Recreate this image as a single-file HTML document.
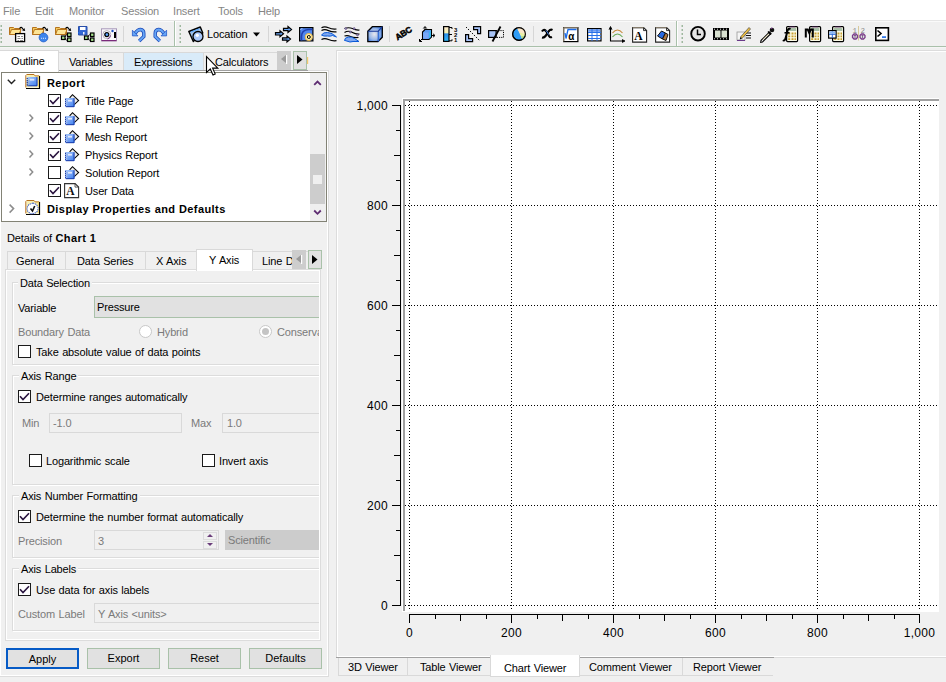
<!DOCTYPE html>
<html><head><meta charset="utf-8">
<style>
*{box-sizing:border-box;margin:0;padding:0}
html,body{width:946px;height:682px;overflow:hidden;background:#f0f0f0;position:relative;font-family:"Liberation Sans",sans-serif;font-size:11px;color:#000}
.a{position:absolute}
.t{position:absolute;white-space:nowrap;line-height:13px;font-size:11px;letter-spacing:-0.15px;word-spacing:0.6px}
.b,b{font-weight:bold;letter-spacing:0.42px;word-spacing:0}
.g{color:#7a7a7a}
.m{color:#858585}
.fr{position:absolute;border:1px solid #dcdcdc;box-shadow:inset 0 0 0 1px #fff}
.cb{position:absolute;width:13px;height:13px;border:1px solid #1a1a1a;background:#fff}

.tab{position:absolute;border:1px solid #d9d9d9;background:#f0f0f0}
.tabw{position:absolute;border:1px solid #d9d9d9;border-bottom:none;background:#fff}
.fld{position:absolute;border:1px solid #d9d9d9;background:#f0f0f0}
.btn{position:absolute;border:1px solid #a9c1a9;background:#e1e1e1;text-align:center;line-height:19px}
.grp{position:absolute;border:1px solid #dcdcdc;box-shadow:1px 1px 0 #fff, inset 1px 1px 0 #fff}
.gt{background:#f0f0f0}
.rad{position:absolute;width:13px;height:13px;border-radius:50%;border:1px solid #c8c8c8;background:#fff}
.rad.on::after{content:"";position:absolute;left:2px;top:2px;width:7px;height:7px;border-radius:50%;background:#c4c4c4}
.hd{height:1px;background:repeating-linear-gradient(to right,#000 0 1px,transparent 1px 3px)}
.vd{width:1px;background:repeating-linear-gradient(to bottom,#000 0 1px,transparent 1px 3px)}
.cl{position:absolute;white-space:nowrap;font-size:12px;line-height:14px;letter-spacing:0.3px}
</style></head><body>

<!-- menu bar -->
<div class="a" style="left:0;top:0;width:946px;height:20px;background:#fff"></div>
<div class="a" style="left:0;top:20px;width:946px;height:1px;background:#e6e6e6"></div>
<div class="a" style="left:0;top:21px;width:946px;height:1px;background:#fafafa"></div>
<div class="t m" style="left:3px;top:5px">File</div>
<div class="t m" style="left:35px;top:5px">Edit</div>
<div class="t m" style="left:69px;top:5px">Monitor</div>
<div class="t m" style="left:121px;top:5px">Session</div>
<div class="t m" style="left:173px;top:5px">Insert</div>
<div class="t m" style="left:218px;top:5px">Tools</div>
<div class="t m" style="left:258px;top:5px">Help</div>

<!-- toolbar -->
<div class="a" style="left:0;top:46px;width:946px;height:1px;background:#a9c0aa"></div>
<div class="a" style="left:0;top:47px;width:946px;height:1px;background:#f5f5f5"></div>
<div class="a" style="left:174px;top:21px;width:1px;height:25px;background:#a9c0aa"></div><div class="a" style="left:175px;top:21px;width:1px;height:25px;background:#fff"></div>
<div class="a" style="left:676px;top:21px;width:1px;height:25px;background:#a9c0aa"></div><div class="a" style="left:677px;top:21px;width:1px;height:25px;background:#fff"></div>
<div class="a" style="left:123px;top:26px;width:1px;height:16px;background:#d6d6d6"></div>
<div class="a" style="left:268px;top:26px;width:1px;height:16px;background:#d6d6d6"></div>
<div class="a" style="left:389px;top:26px;width:1px;height:16px;background:#d6d6d6"></div>
<div class="a" style="left:533px;top:26px;width:1px;height:16px;background:#d6d6d6"></div>
<div class="t" style="left:207px;top:28px">Location</div>

<!-- left outline tabs -->
<div class="fr" style="left:-1px;top:70px;width:330px;height:607px"></div>
<div class="tab" style="left:58px;top:52px;width:66px;height:19px"></div>
<div class="tab" style="left:123px;top:52px;width:81px;height:19px;background:#d9ebf9;border-color:#d9d9d9"></div>
<div class="tab" style="left:203px;top:52px;width:80px;height:19px"></div>
<div class="a" style="left:58px;top:70px;width:250px;height:1px;background:#a0a0a0"></div>
<div class="tabw" style="left:-1px;top:50px;width:60px;height:22px"></div>
<div class="t" style="left:11px;top:55px">Outline</div>
<div class="t" style="left:69px;top:56px">Variables</div>
<div class="t" style="left:134px;top:56px">Expressions</div>
<div class="t" style="left:215px;top:56px">Calculators</div>
<div class="a" style="left:277px;top:51px;width:14px;height:19px;background:#cdcdcd"></div>
<div class="a" style="left:293px;top:51px;width:14px;height:19px;background:#e1e1e1;border:1px solid #a9c1a9"></div>

<!-- tree box -->
<div class="a" style="left:1px;top:72px;width:326px;height:150px;border:1px solid #828275;background:#fff"></div>
<div class="a" style="left:310px;top:73px;width:16px;height:148px;background:#efefef"></div>
<div class="a" style="left:310px;top:154px;width:15px;height:50px;background:#cdcdcd"></div>
<div class="a" style="left:313px;top:175px;width:9px;height:9px;background:#efefef"></div>
<div class="t b" style="left:47px;top:77px">Report</div>
<div class="t" style="left:85px;top:95px">Title Page</div>
<div class="t" style="left:85px;top:113px">File Report</div>
<div class="t" style="left:85px;top:131px">Mesh Report</div>
<div class="t" style="left:85px;top:149px">Physics Report</div>
<div class="t" style="left:85px;top:167px">Solution Report</div>
<div class="t" style="left:85px;top:185px">User Data</div>
<div class="t b" style="left:47px;top:203px">Display Properties and Defaults</div>
<div class="cb ck" style="left:48px;top:94px"></div>
<div class="cb ck" style="left:48px;top:112px"></div>
<div class="cb ck" style="left:48px;top:130px"></div>
<div class="cb ck" style="left:48px;top:148px"></div>
<div class="cb" style="left:48px;top:166px"></div>
<div class="cb ck" style="left:48px;top:184px"></div>

<!-- details -->
<div class="t" style="left:7px;top:232px">Details of <b>Chart 1</b></div>
<div class="tab" style="left:7px;top:251px;width:59px;height:19px"></div>
<div class="tab" style="left:65px;top:251px;width:81px;height:19px"></div>
<div class="tab" style="left:145px;top:251px;width:52px;height:19px"></div>
<div class="tab" style="left:252px;top:251px;width:60px;height:19px"></div>
<div class="fr" style="left:5px;top:269px;width:316px;height:372px"></div>
<div class="tabw" style="left:196px;top:249px;width:57px;height:22px"></div>
<div class="t" style="left:16px;top:255px">General</div>
<div class="t" style="left:77px;top:255px">Data Series</div>
<div class="t" style="left:156px;top:255px">X Axis</div>
<div class="t" style="left:209px;top:254px">Y Axis</div>
<div class="t" style="left:262px;top:255px;width:30px;overflow:hidden">Line Data</div>
<div class="a" style="left:292px;top:250px;width:14px;height:19px;background:#cdcdcd"></div>
<div class="a" style="left:308px;top:250px;width:14px;height:19px;background:#e1e1e1;border:1px solid #a9c1a9"></div>

<div class="a" id="pane" style="left:6px;top:270px;width:313px;height:369px;overflow:hidden">

 <div class="grp" style="left:6px;top:12px;width:400px;height:83px"></div>
 <div class="t gt" style="left:12px;top:7px;padding:0 2px">Data Selection</div>
 <div class="t" style="left:12px;top:32px">Variable</div>
 <div class="a" style="left:88px;top:26px;width:300px;height:22px;background:#e1e1e1;border:1px solid #a9c1a9"></div>
 <div class="t" style="left:91px;top:31px">Pressure</div>
 <div class="t g" style="left:12px;top:56px">Boundary Data</div>
 <div class="rad" style="left:133px;top:55px"></div>
 <div class="t g" style="left:151px;top:56px">Hybrid</div>
 <div class="rad on" style="left:253px;top:55px"></div>
 <div class="t g" style="left:271px;top:56px">Conservative</div>
 <div class="cb" style="left:12px;top:75px"></div>
 <div class="t" style="left:30px;top:76px">Take absolute value of data points</div>

 <div class="grp" style="left:6px;top:105px;width:400px;height:110px"></div>
 <div class="t gt" style="left:13px;top:100px;padding:0 2px">Axis Range</div>
 <div class="cb ck" style="left:12px;top:120px"></div>
 <div class="t" style="left:30px;top:121px">Determine ranges automatically</div>
 <div class="t g" style="left:16px;top:147px">Min</div>
 <div class="fld" style="left:43px;top:143px;width:133px;height:20px"></div>
 <div class="t g" style="left:47px;top:147px">-1.0</div>
 <div class="t g" style="left:185px;top:147px">Max</div>
 <div class="fld" style="left:216px;top:143px;width:200px;height:20px"></div>
 <div class="t g" style="left:221px;top:147px">1.0</div>
 <div class="cb" style="left:23px;top:184px"></div>
 <div class="t" style="left:40px;top:185px">Logarithmic scale</div>
 <div class="cb" style="left:196px;top:184px"></div>
 <div class="t" style="left:213px;top:185px">Invert axis</div>

 <div class="grp" style="left:6px;top:225px;width:400px;height:63px"></div>
 <div class="t gt" style="left:13px;top:220px;padding:0 2px">Axis Number Formatting</div>
 <div class="cb ck" style="left:12px;top:240px"></div>
 <div class="t" style="left:30px;top:241px">Determine the number format automatically</div>
 <div class="t g" style="left:12px;top:265px">Precision</div>
 <div class="fld" style="left:88px;top:260px;width:125px;height:20px"></div>
 <div class="t g" style="left:92px;top:265px">3</div>
 <div class="a" style="left:197px;top:262px;width:14px;height:8px;border:1px solid #dcdcdc"></div>
 <div class="a" style="left:197px;top:271px;width:14px;height:8px;border:1px solid #dcdcdc"></div>
 <div class="a" style="left:201px;top:264px;width:0;height:0;border-left:3px solid transparent;border-right:3px solid transparent;border-bottom:3px solid #6a3d7a"></div>
 <div class="a" style="left:201px;top:273px;width:0;height:0;border-left:3px solid transparent;border-right:3px solid transparent;border-top:3px solid #6a3d7a"></div>
 <div class="a" style="left:219px;top:260px;width:200px;height:20px;background:#cccccc"></div>
 <div class="t g" style="left:222px;top:264px">Scientific</div>

 <div class="grp" style="left:6px;top:298px;width:400px;height:63px"></div>
 <div class="t gt" style="left:13px;top:293px;padding:0 2px">Axis Labels</div>
 <div class="cb ck" style="left:12px;top:313px"></div>
 <div class="t" style="left:30px;top:314px">Use data for axis labels</div>
 <div class="t g" style="left:12px;top:338px">Custom Label</div>
 <div class="fld" style="left:88px;top:333px;width:300px;height:20px"></div>
 <div class="t g" style="left:92px;top:338px">Y Axis &lt;units&gt;</div>
</div>

<!-- buttons -->
<div class="btn" style="left:6px;top:648px;width:73px;height:21px;border:2px solid #065bc6;line-height:18px">Apply</div>
<div class="btn" style="left:87px;top:648px;width:73px;height:21px">Export</div>
<div class="btn" style="left:168px;top:648px;width:73px;height:21px">Reset</div>
<div class="btn" style="left:249px;top:648px;width:73px;height:21px">Defaults</div>

<!-- chart panel -->
<div class="fr" style="left:336px;top:50px;width:620px;height:608px"></div>
<div class="a" style="left:402px;top:98px;width:537px;height:514px;background:#fff"></div>
<div class="a" style="left:403px;top:99px;width:536px;height:2px;background:#a0a0a0"></div>
<div class="a" style="left:403px;top:99px;width:2px;height:512px;background:#a0a0a0"></div>
<div class="a hd" style="left:405px;top:105px;width:533px"></div>
<div class="a hd" style="left:405px;top:205px;width:533px"></div>
<div class="a hd" style="left:405px;top:305px;width:533px"></div>
<div class="a hd" style="left:405px;top:405px;width:533px"></div>
<div class="a hd" style="left:405px;top:505px;width:533px"></div>
<div class="a hd" style="left:405px;top:605px;width:533px"></div>
<div class="a vd" style="left:409px;top:101px;height:509px"></div>
<div class="a vd" style="left:511px;top:101px;height:509px"></div>
<div class="a vd" style="left:613px;top:101px;height:509px"></div>
<div class="a vd" style="left:715px;top:101px;height:509px"></div>
<div class="a vd" style="left:817px;top:101px;height:509px"></div>
<div class="a vd" style="left:919px;top:101px;height:509px"></div>
<div class="a" style="left:400px;top:105px;width:1px;height:501px;background:#000"></div>
<div class="a" style="left:392px;top:105px;width:9px;height:1px;background:#000"></div>
<div class="a" style="left:396px;top:130px;width:5px;height:1px;background:#000"></div>
<div class="a" style="left:394px;top:155px;width:7px;height:1px;background:#000"></div>
<div class="a" style="left:396px;top:180px;width:5px;height:1px;background:#000"></div>
<div class="a" style="left:392px;top:205px;width:9px;height:1px;background:#000"></div>
<div class="a" style="left:396px;top:230px;width:5px;height:1px;background:#000"></div>
<div class="a" style="left:394px;top:255px;width:7px;height:1px;background:#000"></div>
<div class="a" style="left:396px;top:280px;width:5px;height:1px;background:#000"></div>
<div class="a" style="left:392px;top:305px;width:9px;height:1px;background:#000"></div>
<div class="a" style="left:396px;top:330px;width:5px;height:1px;background:#000"></div>
<div class="a" style="left:394px;top:355px;width:7px;height:1px;background:#000"></div>
<div class="a" style="left:396px;top:380px;width:5px;height:1px;background:#000"></div>
<div class="a" style="left:392px;top:405px;width:9px;height:1px;background:#000"></div>
<div class="a" style="left:396px;top:430px;width:5px;height:1px;background:#000"></div>
<div class="a" style="left:394px;top:455px;width:7px;height:1px;background:#000"></div>
<div class="a" style="left:396px;top:480px;width:5px;height:1px;background:#000"></div>
<div class="a" style="left:392px;top:505px;width:9px;height:1px;background:#000"></div>
<div class="a" style="left:396px;top:530px;width:5px;height:1px;background:#000"></div>
<div class="a" style="left:394px;top:555px;width:7px;height:1px;background:#000"></div>
<div class="a" style="left:396px;top:580px;width:5px;height:1px;background:#000"></div>
<div class="a" style="left:392px;top:605px;width:9px;height:1px;background:#000"></div>
<div class="cl" style="right:558px;top:99px">1,000</div>
<div class="cl" style="right:558px;top:199px">800</div>
<div class="cl" style="right:558px;top:299px">600</div>
<div class="cl" style="right:558px;top:399px">400</div>
<div class="cl" style="right:558px;top:499px">200</div>
<div class="cl" style="right:558px;top:599px">0</div>
<div class="a" style="left:409px;top:614px;width:511px;height:1px;background:#000"></div>
<div class="a" style="left:409px;top:614px;width:1px;height:9px;background:#000"></div>
<div class="a" style="left:435px;top:614px;width:1px;height:5px;background:#000"></div>
<div class="a" style="left:460px;top:614px;width:1px;height:7px;background:#000"></div>
<div class="a" style="left:486px;top:614px;width:1px;height:5px;background:#000"></div>
<div class="a" style="left:511px;top:614px;width:1px;height:9px;background:#000"></div>
<div class="a" style="left:537px;top:614px;width:1px;height:5px;background:#000"></div>
<div class="a" style="left:562px;top:614px;width:1px;height:7px;background:#000"></div>
<div class="a" style="left:588px;top:614px;width:1px;height:5px;background:#000"></div>
<div class="a" style="left:613px;top:614px;width:1px;height:9px;background:#000"></div>
<div class="a" style="left:639px;top:614px;width:1px;height:5px;background:#000"></div>
<div class="a" style="left:664px;top:614px;width:1px;height:7px;background:#000"></div>
<div class="a" style="left:690px;top:614px;width:1px;height:5px;background:#000"></div>
<div class="a" style="left:715px;top:614px;width:1px;height:9px;background:#000"></div>
<div class="a" style="left:741px;top:614px;width:1px;height:5px;background:#000"></div>
<div class="a" style="left:766px;top:614px;width:1px;height:7px;background:#000"></div>
<div class="a" style="left:792px;top:614px;width:1px;height:5px;background:#000"></div>
<div class="a" style="left:817px;top:614px;width:1px;height:9px;background:#000"></div>
<div class="a" style="left:843px;top:614px;width:1px;height:5px;background:#000"></div>
<div class="a" style="left:868px;top:614px;width:1px;height:7px;background:#000"></div>
<div class="a" style="left:894px;top:614px;width:1px;height:5px;background:#000"></div>
<div class="a" style="left:919px;top:614px;width:1px;height:9px;background:#000"></div>
<div class="cl" style="left:379px;width:61px;text-align:center;top:626px">0</div>
<div class="cl" style="left:481px;width:61px;text-align:center;top:626px">200</div>
<div class="cl" style="left:583px;width:61px;text-align:center;top:626px">400</div>
<div class="cl" style="left:685px;width:61px;text-align:center;top:626px">600</div>
<div class="cl" style="left:787px;width:61px;text-align:center;top:626px">800</div>
<div class="cl" style="left:889px;width:61px;text-align:center;top:626px">1,000</div>

<!-- bottom tabs -->
<div class="tab" style="left:338px;top:657px;width:70px;height:19px"></div>
<div class="tab" style="left:407px;top:657px;width:84px;height:19px"></div>
<div class="tab" style="left:579px;top:657px;width:104px;height:19px"></div>
<div class="tab" style="left:682px;top:657px;width:91px;height:19px;border-right:none"></div>
<div class="a" style="left:336px;top:657px;width:438px;height:1px;background:#a0a0a0"></div>
<div class="a" style="left:490px;top:655px;width:90px;height:22px;background:#fff;border:1px solid #d9d9d9;border-top:none"></div>
<div class="t" style="left:348px;top:661px">3D Viewer</div>
<div class="t" style="left:420px;top:661px">Table Viewer</div>
<div class="t" style="left:504px;top:662px">Chart Viewer</div>
<div class="t" style="left:589px;top:661px">Comment Viewer</div>
<div class="t" style="left:693px;top:661px">Report Viewer</div>

<svg class="a" style="left:0;top:0" width="946" height="682"><g transform="translate(9,26)"><path d="M0.5,1.5h4l1,1h6v6h-11z" fill="#f2c85e" stroke="#b5731c"/><path d="M0.5,8.5l2,-5h9.5l-2,5z" fill="#fde596" stroke="#b5731c"/><path d="M10.5,2.5q1.7,-2.2 3,0q0.6,1 1.5,1.2" fill="none" stroke="#000" stroke-width="1.1"/><path d="M13.2,4.6l3,0.3l-0.8,-2.8z" fill="#000"/><rect x="6.6" y="7.6" width="9" height="8" fill="#fff" stroke="#000" stroke-width="1.3"/><path d="M8.5,10.5h2.5M12,10.5h2M8.5,12.5h3M12.5,12.5h1.5M8.5,14.5h1.5M11,14.5h3" stroke="#8a8a8a" stroke-width="1"/></g><g transform="translate(32,26)"><path d="M0.5,1.5h4l1,1h6v6h-11z" fill="#f2c85e" stroke="#b5731c"/><path d="M0.5,8.5l2,-5h9.5l-2,5z" fill="#fde596" stroke="#b5731c"/><path d="M10.5,2.5q1.7,-2.2 3,0q0.6,1 1.5,1.2" fill="none" stroke="#000" stroke-width="1.1"/><path d="M13.2,4.6l3,0.3l-0.8,-2.8z" fill="#000"/><circle cx="11.5" cy="11.5" r="4.4" fill="#3b84ec" stroke="#2360c8" stroke-width="0.8"/><path d="M9.2,12.3h0.9M11.1,12.3h0.9M13,12.3h0.9" stroke="#fff" stroke-width="1.1"/></g><g transform="translate(55,26)"><path d="M0.5,1.5h4l1,1h6v6h-11z" fill="#f2c85e" stroke="#b5731c"/><path d="M0.5,8.5l2,-5h9.5l-2,5z" fill="#fde596" stroke="#b5731c"/><path d="M10.5,2.5q1.7,-2.2 3,0q0.6,1 1.5,1.2" fill="none" stroke="#000" stroke-width="1.1"/><path d="M13.2,4.6l3,0.3l-0.8,-2.8z" fill="#000"/><path d="M7,11.5h2.5M9.5,11.5l2,-3M9.5,11.5l2,3" stroke="#000" stroke-width="1"/><rect x="6.5" y="10" width="3.5" height="3.5" fill="#a6e38c" stroke="#000" stroke-width="1.2"/><rect x="12.5" y="7" width="3.5" height="3.5" fill="#a6e38c" stroke="#000" stroke-width="1.2"/><rect x="12.5" y="12" width="3.5" height="3.5" fill="#a6e38c" stroke="#000" stroke-width="1.2"/></g><g transform="translate(78,26)"><path d="M0.5,0.5h8.5v8.5h-8.5z" fill="#3368d4" stroke="#2a4fa8"/><rect x="2" y="1" width="5.5" height="3" fill="#fff"/><rect x="5" y="6" width="1.5" height="2.5" fill="#e8eefc"/><rect x="0" y="6" width="1" height="1.5" fill="#1a6ae8"/><path d="M7,11.5h2.5M9.5,11.5l2,-3M9.5,11.5l2,3" stroke="#000" stroke-width="1"/><rect x="6.5" y="10" width="3.5" height="3.5" fill="#a6e38c" stroke="#000" stroke-width="1.2"/><rect x="12.5" y="7" width="3.5" height="3.5" fill="#a6e38c" stroke="#000" stroke-width="1.2"/><rect x="12.5" y="12" width="3.5" height="3.5" fill="#a6e38c" stroke="#000" stroke-width="1.2"/></g><g transform="translate(101,28)"><rect x="0.5" y="0.8" width="15" height="12" fill="#faf8fc" stroke="#a898b8" stroke-width="1"/><circle cx="5.8" cy="6.6" r="4" fill="#fff" stroke="#b8b0c0" stroke-width="1"/><path d="M9.5,7.5a4,4 0 0 1 -3,3.5" fill="none" stroke="#7a3a8a" stroke-width="1"/><circle cx="5.8" cy="6.6" r="2.6" fill="#000"/><circle cx="5.9" cy="6.6" r="1.3" fill="#5aa0ff"/><rect x="13" y="4" width="2" height="6" fill="#000"/><circle cx="11.5" cy="3" r="1.2" fill="#2050c0"/><rect x="0.5" y="12" width="15" height="1.2" fill="#7a2a7a"/></g><g transform="translate(132,28)"><path d="M3,5.5Q5.5,1.5 8.5,1.5Q11.8,1.8 11.8,5.5V8.5L7.2,13" fill="none" stroke="#1d49b8" stroke-width="3.4"/><path d="M3,5.5Q5.5,1.5 8.5,1.5Q11.8,1.8 11.8,5.5V8.5L7.2,13" fill="none" stroke="#66a6f6" stroke-width="1.8"/><path d="M0.4,2.2V7.9H6z" fill="#66a6f6" stroke="#2a5ac8" stroke-width="0.8"/></g><g transform="translate(167,28)"><g transform="scale(-1,1)"><path d="M3,5.5Q5.5,1.5 8.5,1.5Q11.8,1.8 11.8,5.5V8.5L7.2,13" fill="none" stroke="#1d49b8" stroke-width="3.4"/><path d="M3,5.5Q5.5,1.5 8.5,1.5Q11.8,1.8 11.8,5.5V8.5L7.2,13" fill="none" stroke="#66a6f6" stroke-width="1.8"/><path d="M0.4,2.2V7.9H6z" fill="#66a6f6" stroke="#2a5ac8" stroke-width="0.8"/></g></g><g transform="translate(188,26)"><path d="M0.8,5.5l11.5,-4.5l2.5,6l-9.5,8.5z" fill="#9cc0ea" stroke="#000" stroke-width="1.4" stroke-linejoin="round"/><path d="M3,6l8,-3" stroke="#5aa8ff" stroke-width="1.2"/><circle cx="10" cy="10.5" r="5" fill="#a9c8fb" stroke="#000" stroke-width="1.3"/><circle cx="9.3" cy="9.3" r="1.6" fill="#fff"/></g><g transform="translate(275,26)"><path d="M8.5,2.3h4.5v-1.8l3.5,3l-3.5,3v-1.8h-4.5z" fill="#6aa6f5" stroke="#000" stroke-width="1.2" stroke-linejoin="miter"/><path d="M0.5,6.6h4.5v-1.8l3.5,3l-3.5,3v-1.8h-4.5z" fill="#6aa6f5" stroke="#000" stroke-width="1.2" stroke-linejoin="miter"/><path d="M7.5,11.8h4.5v-1.8l3.5,3l-3.5,3v-1.8h-4.5z" fill="#6aa6f5" stroke="#000" stroke-width="1.2" stroke-linejoin="miter"/></g><g transform="translate(299,27)"><rect x="0.6" y="0.6" width="13.3" height="13.3" fill="#4f86ee" stroke="#000" stroke-width="1.2"/><path d="M2.5,13.5v-4q0,-6.5 7,-7h4" fill="none" stroke="#2040b0" stroke-width="1.6"/><path d="M1.5,3q0,-1.5 2,-1.5" fill="none" stroke="#9ec0ff" stroke-width="1"/><circle cx="9.8" cy="10" r="3.6" fill="#fff2b0" stroke="#e8b84a" stroke-width="1"/><circle cx="9.8" cy="10" r="1.5" fill="none" stroke="#000" stroke-width="1"/></g><g transform="translate(321,26)"><path d="M0.5,1.8q3,-1.8 7,0t8,1.2" fill="none" stroke="#000" stroke-width="1.2"/><path d="M0.5,4.6q3,-1.8 7,0t8,1.2" fill="none" stroke="#000" stroke-width="1.2"/><path d="M0.5,9q2,-3 6,-2.5q4,0.5 6,2l3,2.5l-4,-1.5q-2,1 -5,0.5q-4,0.5 -6,-1z" fill="#7fa8f0" stroke="#0a5ad8" stroke-width="1"/><path d="M0.5,13.5q3,-1.8 7,0t8,1.2" fill="none" stroke="#000" stroke-width="1.2"/></g><g transform="translate(344,27)"><path d="M0.5,1.5q4,-1.5 8,0q3,1.8 7,1.5" fill="none" stroke="#000" stroke-width="1.2"/><path d="M0.5,5.5q4,-2.5 8,0q3,1.8 7,1.5" fill="none" stroke="#000" stroke-width="1.2"/><path d="M0.5,9q3,-1 6,0.5q3,1.5 8,1" fill="none" stroke="#000" stroke-width="1.1"/><circle cx="1.8" cy="1.6" r="1" fill="#8ab" stroke="#602070" stroke-width="0.5"/><circle cx="10.2" cy="1.6" r="1" fill="#8ab" stroke="#602070" stroke-width="0.5"/><circle cx="6.4" cy="5" r="1" fill="#8ab" stroke="#602070" stroke-width="0.5"/><circle cx="13.5" cy="8" r="1" fill="#8ab" stroke="#602070" stroke-width="0.5"/><path d="M0.5,13.5q0,-3 4,-3.5q3,-0.5 6,1.5l4.5,3h-6q-2,1.5 -8,-1z" fill="#7fa8f0" stroke="#0a5ad8" stroke-width="1"/></g><g transform="translate(367,26)"><defs><radialGradient id="cg" cx="0.45" cy="0.5" r="0.6"><stop offset="0" stop-color="#e8e8ee"/><stop offset="0.6" stop-color="#9ab8e8"/><stop offset="1" stop-color="#3a78e0"/></radialGradient></defs><path d="M0.8,5.2l4.5,-4.5h10v10.5l-4.5,4.5h-10z" fill="url(#cg)" stroke="#000" stroke-width="1.3" stroke-linejoin="round"/><path d="M0.8,5.2h10.5v10.5M11.3,5.2l4,-4.5" fill="none" stroke="#1a3a9a" stroke-width="1.1"/><path d="M11.8,6v9" stroke="#3a80f0" stroke-width="1"/></g><g transform="translate(396,26)"><text x="0" y="0" transform="translate(1.5,14.5) rotate(-32)" font-family="Liberation Sans" font-weight="bold" font-size="8.5" fill="#000" stroke="#000" stroke-width="0.5" letter-spacing="-0.2">ABC</text></g><g transform="translate(419,26)"><path d="M6,1v6M4.3,2.5l1.7,-2l1.7,2" fill="none" stroke="#000" stroke-width="1"/><path d="M11,9.5h4.5M14,7.8l2,1.7l-2,1.7" fill="none" stroke="#000" stroke-width="1"/><path d="M4,12l-3,3M0.5,13v2.5h2.5" fill="none" stroke="#000" stroke-width="1"/><path d="M3.5,6l2.5,-2.5h6.5v7.5l-2.5,2.5h-6.5z" fill="#5a9af0" stroke="#000" stroke-width="1.1"/><rect x="4.2" y="6.5" width="5.3" height="6" fill="#78a8f8"/><path d="M10,6.2l2,-2v6.5l-2,2z" fill="#3ab8f0"/></g><g transform="translate(443,26)"><defs><linearGradient id="lg" x1="0" y1="0" x2="0" y2="1"><stop offset="0" stop-color="#fce8d0"/><stop offset="0.4" stop-color="#f4f0b0"/><stop offset="0.5" stop-color="#2b8ee8"/><stop offset="1" stop-color="#30b8f8"/></linearGradient></defs><rect x="0.6" y="0.6" width="5.4" height="14.8" fill="url(#lg)" stroke="#000" stroke-width="1.2"/><path d="M6,1.5h3v1.5M6,8.5h3M6,14.8h3v-1.5" fill="none" stroke="#000" stroke-width="1"/><text x="11" y="6" font-family="Liberation Sans" font-weight="bold" font-size="6" fill="#000">3</text><text x="11" y="11" font-family="Liberation Sans" font-weight="bold" font-size="6" fill="#000">2</text><text x="11" y="16" font-family="Liberation Sans" font-weight="bold" font-size="6" fill="#000">1</text></g><g transform="translate(465,26)"><path d="M1,1l14,14" stroke="#000" stroke-width="1" stroke-dasharray="1.4 1.4"/><path d="M8.6,0.6h7v7h-3v-4h-4z" fill="#a8c4fa" stroke="#000" stroke-width="1.2"/><path d="M0.6,8.6v7h7v-3h-4v-4z" fill="#a8c4fa" stroke="#000" stroke-width="1.2"/></g><g transform="translate(488,26)"><rect x="0.6" y="4.6" width="7.5" height="6.8" fill="#a8c4f6" stroke="#000" stroke-width="1.2"/><path d="M8,4.6h7.5v6.8h-7.5" fill="none" stroke="#000" stroke-width="1" stroke-dasharray="1.2 1"/><path d="M12.5,0.5l-8,15" stroke="#000" stroke-width="1.8"/></g><g transform="translate(512,27)"><circle cx="7" cy="7" r="6.3" fill="#2e9cf6" stroke="#000" stroke-width="1.1"/><path d="M5,0.9L10.4,12.3A6.3,6.3 0 0 0 5,0.9z" fill="#fbe6c8"/><path d="M5,0.9A6.3,6.3 0 0 1 13.3,7.2L7.7,5.5z" fill="#fbe6c8"/><path d="M7.7,5.5L13.3,7.2A6.3,6.3 0 0 1 10.4,12.3z" fill="#e8f0a0"/><path d="M8.8,9.2L13,9A6.3,6.3 0 0 1 10.4,12.3z" fill="#b0d890"/><circle cx="7" cy="7" r="6.4" fill="none" stroke="#000" stroke-width="1.1"/></g><g transform="translate(541,28)"><path d="M1,3.5q1.5,-2.5 3.5,-1q2,2 3,4.5q1,3 3.5,2" fill="none" stroke="#000" stroke-width="2.2"/><path d="M11.5,2q-2,-1 -4,1.5l-3,4.5q-1.5,2 -3.5,1.5" fill="none" stroke="#000" stroke-width="2.2"/><path d="M5,2.5q1.5,1.5 2.5,4" fill="none" stroke="#4a90ff" stroke-width="1"/></g><g transform="translate(563,27)"><rect x="0.6" y="0.6" width="14.3" height="14" fill="#fff" stroke="#000" stroke-width="1.2"/><path d="M0.6,0.6h14.3M0.6,0.6v14" stroke="#7a7060" stroke-width="1.2"/><path d="M1.8,1.2" fill="none"/><path d="M2,6l1,5.5l2,-9h8.5" fill="none" stroke="#1a6ae8" stroke-width="1.3"/><text x="5.2" y="12.8" font-family="Liberation Sans" font-weight="bold" font-size="10" fill="#000">&#945;</text></g><g transform="translate(587,28)"><rect x="0.6" y="0.6" width="13.4" height="12.3" fill="#fff" stroke="#000" stroke-width="1.2"/><rect x="1.2" y="1.2" width="12.2" height="2.6" fill="#6a9af0"/><path d="M1,4.5h13M1,7.5h13M1,10.5h13M5,1v12M10,1v12" stroke="#2a72e8" stroke-width="1"/></g><g transform="translate(609,26)"><path d="M1.5,2v13h13" fill="none" stroke="#000" stroke-width="1.1"/><path d="M0,3.5l1.5,-3l1.5,3M13,13.5l3,1.5l-3,1.5" fill="#000" stroke="#000" stroke-width="0.8"/><path d="M3.5,7q5,-6 10,0" fill="none" stroke="#c88a3a" stroke-width="1.1"/><path d="M3.5,11q5,-6 10,0" fill="none" stroke="#6aaa5a" stroke-width="1.1"/></g><g transform="translate(632,27)"><path d="M0.6,0.6h11l3,3v11.5h-14z" fill="#fff" stroke="#222" stroke-width="1.1"/><path d="M11.5,0.6v3h3" fill="none" stroke="#222" stroke-width="0.9"/><path d="M0.6,0.6h11" stroke="#8a8070" stroke-width="1.1"/><text x="2.3" y="12.5" font-family="Liberation Serif" font-weight="bold" font-size="11.5" fill="#000">A</text></g><g transform="translate(655,27)"><path d="M0.6,0.6h11l3,3v11.5h-14z" fill="#fff" stroke="#222" stroke-width="1.1"/><path d="M11.5,0.6v3h3" fill="none" stroke="#222" stroke-width="0.9"/><path d="M0.6,0.6h11" stroke="#8a8070" stroke-width="1.1"/><path d="M2.5,9l4,-5l4,2l-3,6z" fill="#2a6ae0" stroke="#111" stroke-width="1"/><path d="M7.5,12l3,-6l2.5,1.5l-2,6z" fill="#b07840" stroke="#111" stroke-width="1"/></g><g transform="translate(690,26)"><circle cx="8" cy="7.7" r="6.8" fill="#e4e4e4" stroke="#000" stroke-width="1.9"/><path d="M7.5,3.5v5h3.5" fill="none" stroke="#000" stroke-width="1.5"/></g><g transform="translate(713,28)"><rect x="0" y="0" width="16" height="12" fill="#000"/><rect x="2" y="2.5" width="5.5" height="7" fill="#d8e0d0"/><rect x="8.5" y="2.5" width="5.5" height="7" fill="#d8e0d0"/><path d="M1,1.2h14M1,10.8h14" stroke="#fff" stroke-width="0.9" stroke-dasharray="1 2"/></g><g transform="translate(736,27)"><rect x="1" y="5" width="8" height="8" fill="#f4f4f4" stroke="#999" stroke-width="0.8"/><path d="M1,13.5h8" stroke="#6a3a8a" stroke-width="1"/><path d="M9,6h6M10,8.5h5M10,11h5" stroke="#111" stroke-width="1"/><path d="M4.5,10l8.5,-9.5l1.5,1.5l-8.5,9.5z" fill="#f0c040" stroke="#444" stroke-width="0.7"/><path d="M4.5,10l-0.8,2.5l2.3,-1z" fill="#000"/></g><g transform="translate(760,27)"><path d="M1,13.5l8.5,-8.5l1.5,1.5l-8.5,8.5l-1.8,0.3z" fill="#fff" stroke="#000" stroke-width="1.1"/><path d="M3,12.5l6,-6" stroke="#e8d8a0" stroke-width="0.8"/><path d="M8,4.5l3,3" stroke="#000" stroke-width="1.6"/><circle cx="12" cy="3" r="2.3" fill="#111"/><circle cx="11.7" cy="1.2" r="0.8" fill="#7a3a8a"/></g><g transform="translate(782,26)"><rect x="4.6" y="0.6" width="11" height="15" rx="1" fill="#fbfbe8" stroke="#000" stroke-width="1.2"/><rect x="6" y="2" width="8.3" height="3" fill="#a8c0a8"/><path d="M6.2,7.5h2M9.5,7.5h2M12.5,7.5h1.5M6.2,10.3h2M9.5,10.3h2M12.5,10.3h1.5M6.2,13.2h2M9.5,13.2h2M12.5,13.2h1.5" stroke="#c8a030" stroke-width="1.8"/><path d="M7,1h6" stroke="#7a3a8a" stroke-width="0.6"/><path d="M0.8,14.2q1.5,1 2.5,-1.2l2.3,-8.5q0.7,-2.3 3,-1.6" fill="none" stroke="#000" stroke-width="1.9"/><path d="M2.5,6.8h5" stroke="#000" stroke-width="1.6"/></g><g transform="translate(805,26)"><rect x="4.6" y="0.6" width="11" height="15" rx="1" fill="#fbfbe8" stroke="#000" stroke-width="1.2"/><rect x="6" y="2" width="8.3" height="3" fill="#a8c0a8"/><path d="M6.2,7.5h2M9.5,7.5h2M12.5,7.5h1.5M6.2,10.3h2M9.5,10.3h2M12.5,10.3h1.5M6.2,13.2h2M9.5,13.2h2M12.5,13.2h1.5" stroke="#c8a030" stroke-width="1.8"/><path d="M7,1h6" stroke="#7a3a8a" stroke-width="0.6"/><path d="M0.8,11.5v-8h2l1.5,3.5l1.5,-3.5h2v8" fill="none" stroke="#000" stroke-width="2"/></g><g transform="translate(828,26)"><rect x="4.6" y="0.6" width="11" height="15" rx="1" fill="#fbfbe8" stroke="#000" stroke-width="1.2"/><rect x="6" y="2" width="8.3" height="3" fill="#a8c0a8"/><path d="M6.2,7.5h2M9.5,7.5h2M12.5,7.5h1.5M6.2,10.3h2M9.5,10.3h2M12.5,10.3h1.5M6.2,13.2h2M9.5,13.2h2M12.5,13.2h1.5" stroke="#c8a030" stroke-width="1.8"/><path d="M7,1h6" stroke="#7a3a8a" stroke-width="0.6"/><rect x="0.6" y="4.6" width="7.5" height="7.5" fill="#fff" stroke="#000" stroke-width="1.2"/><path d="M1,8.3h7M4.3,5v7" stroke="#2a6ad8" stroke-width="1"/><rect x="1.5" y="5.5" width="5.8" height="2.3" fill="#8ab8f8"/></g><g transform="translate(851,26)"><text x="1.6" y="6.8" font-family="Liberation Mono" font-size="7.5" fill="#8a8a8a">1</text><text x="9.5" y="6.8" font-family="Liberation Mono" font-size="7.5" fill="#8a8a8a">2</text><path d="M7.5,0v14.5" stroke="#d4c490" stroke-width="0.9"/><path d="M1.5,9.5l1.5,-1.5h2l1.5,1.5v2l-1.5,1.5h-2l-1.5,-1.5z" fill="#d8e8d8" stroke="#7a3a8a" stroke-width="1.3"/><path d="M9,9.5l1.5,-1.5h2l1.5,1.5v2l-1.5,1.5h-2l-1.5,-1.5z" fill="#d8e8d8" stroke="#7a3a8a" stroke-width="1.3"/><path d="M3,9.5h2M4,9.5v2.5M10.5,9.5h2M11.5,9.5v2.5" stroke="#7a3a8a" stroke-width="0.8"/></g><g transform="translate(875,27)"><rect x="0.8" y="0.8" width="12.6" height="12.6" fill="#fff" stroke="#000" stroke-width="1.6"/><path d="M2.5,3.5l3.5,3l-3.5,3" fill="none" stroke="#000" stroke-width="1.6"/><rect x="7" y="9.3" width="4" height="1.6" fill="#1a6ae8"/></g><rect x="0.5" y="25" width="1.5" height="2" fill="#9fb89f"/><rect x="0.5" y="29" width="1.5" height="2" fill="#9fb89f"/><rect x="0.5" y="33" width="1.5" height="2" fill="#9fb89f"/><rect x="0.5" y="37" width="1.5" height="2" fill="#9fb89f"/><rect x="0.5" y="41" width="1.5" height="2" fill="#9fb89f"/><rect x="179.5" y="25" width="1.5" height="2" fill="#9fb89f"/><rect x="179.5" y="29" width="1.5" height="2" fill="#9fb89f"/><rect x="179.5" y="33" width="1.5" height="2" fill="#9fb89f"/><rect x="179.5" y="37" width="1.5" height="2" fill="#9fb89f"/><rect x="179.5" y="41" width="1.5" height="2" fill="#9fb89f"/><rect x="681.5" y="25" width="1.5" height="2" fill="#9fb89f"/><rect x="681.5" y="29" width="1.5" height="2" fill="#9fb89f"/><rect x="681.5" y="33" width="1.5" height="2" fill="#9fb89f"/><rect x="681.5" y="37" width="1.5" height="2" fill="#9fb89f"/><rect x="681.5" y="41" width="1.5" height="2" fill="#9fb89f"/><path d="M253,32.5h7l-3.5,4z" fill="#000"/><path d="M7.8,79.8l3.7,3.7l3.7,-3.7" fill="none" stroke="#222" stroke-width="1.4"/><path d="M29.5,114.5l3.2,3.5l-3.2,3.5" fill="none" stroke="#8c8c8c" stroke-width="1.5"/><path d="M29.5,132.5l3.2,3.5l-3.2,3.5" fill="none" stroke="#8c8c8c" stroke-width="1.5"/><path d="M29.5,150.5l3.2,3.5l-3.2,3.5" fill="none" stroke="#8c8c8c" stroke-width="1.5"/><path d="M29.5,168.5l3.2,3.5l-3.2,3.5" fill="none" stroke="#8c8c8c" stroke-width="1.5"/><path d="M9.6,204.6l4,4l-4,4" fill="none" stroke="#8c8c8c" stroke-width="1.5"/><defs><linearGradient id="nbg" x1="0" y1="0" x2="1" y2="1"><stop offset="0" stop-color="#a6cafd"/><stop offset="0.55" stop-color="#6e9ef4"/><stop offset="1" stop-color="#3a80ee"/></linearGradient></defs><g transform="translate(25,73)"><path d="M1.5,2.5v-1.5h7.5l1,1.5h4.5v12h-13.5z" fill="#f8f0b4"/><path d="M14.5,3v12.5h-13.5" fill="none" stroke="#000" stroke-width="1.2"/><path d="M0.8,14.5v-12l1,-1h7.2l1.2,1.4h4" fill="none" stroke="#b9701e" stroke-width="1"/><path d="M13.3,3v11" stroke="#f2d46a" stroke-width="1"/><rect x="2.2" y="4" width="10" height="9" fill="url(#nbg)"/><path d="M12,4.2v8.6h-9.5" fill="none" stroke="#1a3aa8" stroke-width="1"/><rect x="4.8" y="5.8" width="4.5" height="1.8" fill="#dfe8fc"/><path d="M2.4,5v8" stroke="#1a3aa8" stroke-width="1.6" stroke-dasharray="1.1 0.8"/><path d="M3.3,5v8" stroke="#f0e080" stroke-width="0.6" stroke-dasharray="1.1 0.8"/></g><g transform="translate(25,199)"><path d="M1.5,2.5v-1.5h7.5l1,1.5h4.5v12h-13.5z" fill="#f8f0b4"/><path d="M14.5,3v12.5h-13.5" fill="none" stroke="#000" stroke-width="1.2"/><path d="M0.8,14.5v-12l1,-1h7.2l1.2,1.4h4" fill="none" stroke="#b9701e" stroke-width="1"/><path d="M13.3,3v11" stroke="#f2d46a" stroke-width="1"/><path d="M8,4l3.5,1.5l1.8,3.5l-1,3.5l-3,2l-3.5,0.3l-3,-2.3l-1,-3.5l2,-3.5z" fill="#fff" stroke="#4a66c8" stroke-width="1.1" stroke-dasharray="1.4 0.8"/><path d="M5.5,9.5l2,2.5l2.2,-5" fill="none" stroke="#111" stroke-width="1.6"/></g><g transform="translate(65,94)"><path d="M4.6,3.9L7.5,0.7L13.6,6.6L9.2,10.6" fill="#ececec" stroke="#000" stroke-width="1.05"/><rect x="0.3" y="4" width="9.2" height="9" fill="url(#nbg)"/><path d="M9,4.3v8.4h-8.2" fill="none" stroke="#1a3aa8" stroke-width="1"/><rect x="3" y="5.8" width="4" height="1.8" fill="#dfe8fc"/><path d="M0.8,4.8v8" stroke="#1a3aa8" stroke-width="1.5" stroke-dasharray="1.1 0.9"/><path d="M1.6,4.8v8" stroke="#fff" stroke-width="0.7" stroke-dasharray="1.1 0.9"/></g><g transform="translate(65,112)"><path d="M4.6,3.9L7.5,0.7L13.6,6.6L9.2,10.6" fill="#ececec" stroke="#000" stroke-width="1.05"/><rect x="0.3" y="4" width="9.2" height="9" fill="url(#nbg)"/><path d="M9,4.3v8.4h-8.2" fill="none" stroke="#1a3aa8" stroke-width="1"/><rect x="3" y="5.8" width="4" height="1.8" fill="#dfe8fc"/><path d="M0.8,4.8v8" stroke="#1a3aa8" stroke-width="1.5" stroke-dasharray="1.1 0.9"/><path d="M1.6,4.8v8" stroke="#fff" stroke-width="0.7" stroke-dasharray="1.1 0.9"/></g><g transform="translate(65,130)"><path d="M4.6,3.9L7.5,0.7L13.6,6.6L9.2,10.6" fill="#ececec" stroke="#000" stroke-width="1.05"/><rect x="0.3" y="4" width="9.2" height="9" fill="url(#nbg)"/><path d="M9,4.3v8.4h-8.2" fill="none" stroke="#1a3aa8" stroke-width="1"/><rect x="3" y="5.8" width="4" height="1.8" fill="#dfe8fc"/><path d="M0.8,4.8v8" stroke="#1a3aa8" stroke-width="1.5" stroke-dasharray="1.1 0.9"/><path d="M1.6,4.8v8" stroke="#fff" stroke-width="0.7" stroke-dasharray="1.1 0.9"/></g><g transform="translate(65,148)"><path d="M4.6,3.9L7.5,0.7L13.6,6.6L9.2,10.6" fill="#ececec" stroke="#000" stroke-width="1.05"/><rect x="0.3" y="4" width="9.2" height="9" fill="url(#nbg)"/><path d="M9,4.3v8.4h-8.2" fill="none" stroke="#1a3aa8" stroke-width="1"/><rect x="3" y="5.8" width="4" height="1.8" fill="#dfe8fc"/><path d="M0.8,4.8v8" stroke="#1a3aa8" stroke-width="1.5" stroke-dasharray="1.1 0.9"/><path d="M1.6,4.8v8" stroke="#fff" stroke-width="0.7" stroke-dasharray="1.1 0.9"/></g><g transform="translate(65,166)"><path d="M4.6,3.9L7.5,0.7L13.6,6.6L9.2,10.6" fill="#ececec" stroke="#000" stroke-width="1.05"/><rect x="0.3" y="4" width="9.2" height="9" fill="url(#nbg)"/><path d="M9,4.3v8.4h-8.2" fill="none" stroke="#1a3aa8" stroke-width="1"/><rect x="3" y="5.8" width="4" height="1.8" fill="#dfe8fc"/><path d="M0.8,4.8v8" stroke="#1a3aa8" stroke-width="1.5" stroke-dasharray="1.1 0.9"/><path d="M1.6,4.8v8" stroke="#fff" stroke-width="0.7" stroke-dasharray="1.1 0.9"/></g><g transform="translate(64,183)"><path d="M0.6,0.6h10.5l3.5,3.5v10.5h-14z" fill="#fff" stroke="#333" stroke-width="1.1"/><path d="M11,0.6v3.5h3.5" fill="none" stroke="#333" stroke-width="0.8"/><text x="2.2" y="12.3" font-family="Liberation Serif" font-weight="bold" font-size="11.5" fill="#111">A</text></g><path d="M314.2,84.8l3.3,-3.3l3.3,3.3" fill="none" stroke="#5e2d72" stroke-width="1.8"/><path d="M314.2,210.5l3.3,3.3l3.3,-3.3" fill="none" stroke="#5e2d72" stroke-width="1.8"/><path d="M281,59l5,-4v8z" fill="#9a9a9a"/><rect x="286" y="55" width="1.2" height="9" fill="#fff"/><path d="M297,55v9l5.5,-4.5z" fill="#000"/><rect x="307" y="57" width="1.2" height="7" fill="#f2c870"/><path d="M296,259l5,-4v8z" fill="#9a9a9a"/><rect x="301" y="255" width="1.2" height="9" fill="#fff"/><path d="M312,255v9l5.5,-4.5z" fill="#000"/><path d="M206.5,56.5v16l3.8,-3.6l2.7,6l2.2,-1l-2.6,-5.8h5.2z" fill="#fff" stroke="#000" stroke-width="1.1" stroke-linejoin="miter"/><path d="M50,100.2l3,3.3l6,-6.3" fill="none" stroke="#2b1540" stroke-width="1.6"/><path d="M50,118.2l3,3.3l6,-6.3" fill="none" stroke="#2b1540" stroke-width="1.6"/><path d="M50,136.2l3,3.3l6,-6.3" fill="none" stroke="#2b1540" stroke-width="1.6"/><path d="M50,154.2l3,3.3l6,-6.3" fill="none" stroke="#2b1540" stroke-width="1.6"/><path d="M50,190.2l3,3.3l6,-6.3" fill="none" stroke="#2b1540" stroke-width="1.6"/><path d="M20,396.2l3,3.3l6,-6.3" fill="none" stroke="#2b1540" stroke-width="1.6"/><path d="M20,516.2l3,3.3l6,-6.3" fill="none" stroke="#2b1540" stroke-width="1.6"/><path d="M20,589.2l3,3.3l6,-6.3" fill="none" stroke="#2b1540" stroke-width="1.6"/></svg>
</body></html>
